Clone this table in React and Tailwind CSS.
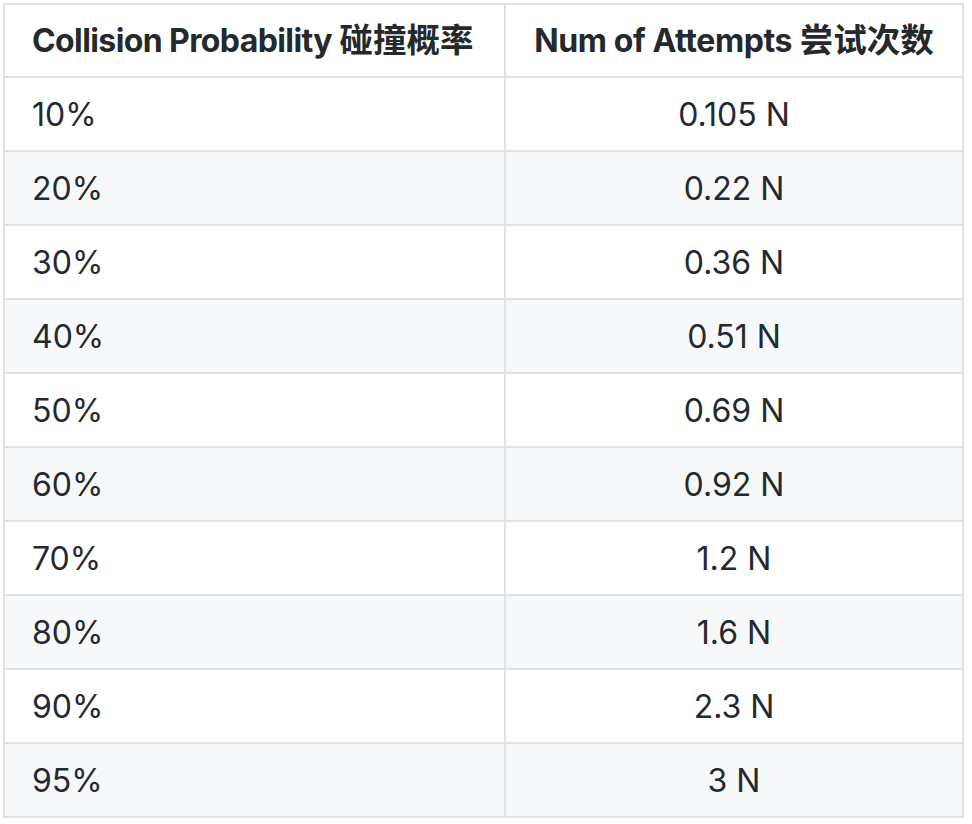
export default function App() {
  const rows = [
    ["10%", "0.105 N"],
    ["20%", "0.22 N"],
    ["30%", "0.36 N"],
    ["40%", "0.51 N"],
    ["50%", "0.69 N"],
    ["60%", "0.92 N"],
    ["70%", "1.2 N"],
    ["80%", "1.6 N"],
    ["90%", "2.3 N"],
    ["95%", "3 N"],
  ];
  return (
    <div className="bg-white w-[972px] h-[824px] pt-[3px] pl-[3px] text-[#24292e] font-['Inter','Noto_Sans_CJK_SC',sans-serif]">
      <table className="border-collapse w-[961px] text-[32px] leading-[48px]">
        <thead>
          <tr className="bg-white">
            <th className="border-2 border-[#dfe2e5] px-[27px] pt-[12px] pb-[11px] text-left font-bold w-[501px] whitespace-nowrap">
              <span className="tracking-[-0.6px]">Collision Probability</span>{" "}
              <span className="text-[33.5px] leading-none font-['Noto_Sans_CJK_SC',sans-serif]">碰撞概率</span>
            </th>
            <th className="border-2 border-[#dfe2e5] px-[27px] pt-[12px] pb-[11px] text-center font-bold whitespace-nowrap">
              <span className="tracking-[-0.4px]">Num of Attempts</span>{" "}
              <span className="text-[33.5px] leading-none font-['Noto_Sans_CJK_SC',sans-serif]">尝试次数</span>
            </th>
          </tr>
        </thead>
        <tbody>
          {rows.map(([a, b], i) => (
            <tr key={a} className={i % 2 === 1 ? "bg-[#f6f8fa]" : "bg-white"}>
              <td className="border-2 border-[#dfe2e5] px-[27px] pt-[13px] pb-[11px] text-left">{a}</td>
              <td className="border-2 border-[#dfe2e5] px-[27px] pt-[13px] pb-[11px] text-center">{b}</td>
            </tr>
          ))}
        </tbody>
      </table>
    </div>
  );
}
